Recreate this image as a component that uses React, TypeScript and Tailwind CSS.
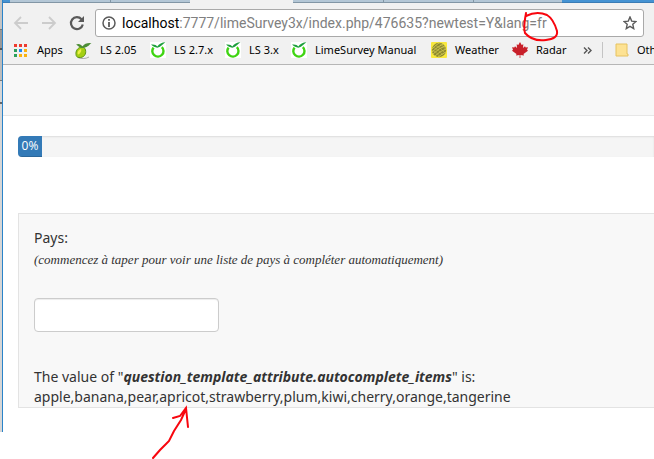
import React from "react";

const font = "font-['Open_Sans','Noto_Sans',sans-serif]";

function LimeRing() {
  return (
    <svg width="16" height="16" viewBox="0 0 16 16" fill="none" className="shrink-0">
      <rect width="16" height="16" fill="#fff" />
      <path d="M3.600 5.600A5.600 5.400 0 1 0 11.800 5.200" stroke="#3fd412" strokeWidth="2.400" />
      <path d="M1 2.600C4 2 6.300 3 7.300 4.400C9 2 12 .3 15.500 .3C12.500 2 11.500 5 7.300 5.800C5 5.600 3 4.400 1 2.600Z" fill="#1d9f3c" />
    </svg>
  );
}

function Lime() {
  return (
    <svg width="17" height="17" viewBox="0 0 17 17" className="shrink-0">
      <path d="M3 15.500C5 17 11 17 14 15" stroke="#aaa" fill="none" />
      <path d="M6 5C2.500 6 .5 9 1 12.500C1 14 2 15.500 4 15.500C9 16 11.500 12 10.500 8C10 5.500 8 4.500 6 5Z" fill="#a5cf12" stroke="#5d9418" />
      <path d="M4 8C2.500 9.500 2.300 11 3 12.500C5 12 7 9 6 7Z" fill="#eef04a" />
      <path d="M1 2.500C4 1 6 2.500 7.500 4.500C9 1.500 13 .5 16.500 1C14 2.500 14 5 8 6C4.500 6 3.500 4 1 2.500Z" fill="#4b8d35" />
    </svg>
  );
}

function Weather() {
  return (
    <svg width="16" height="16" viewBox="0 0 16 16" className="shrink-0">
      <rect width="16" height="16" rx="1" fill="#f8e83e" />
      <circle cx="8" cy="8" r="7.200" fill="#8d8a2e" />
      <path d="M1 7Q5 3 8 1M1 10Q6 5 12 2M2 12Q8 6 14 4M4 14Q9 9 15 7M7 15Q11 12 15 10" stroke="#dcd25a" strokeWidth=".8" fill="none" />
      <path d="M4 3Q10 6 14 11M2 5Q8 8 12 13M1 8Q6 10 9 15M8 1Q13 4 15 8" stroke="#c9bf4c" strokeWidth=".6" fill="none" />
    </svg>
  );
}

function Maple() {
  return (
    <svg width="16" height="16" viewBox="0 0 16 16" className="shrink-0">
      <path d="M8 0L9.700 3L11.300 2.200L11 6L13 4.200L13.700 5.500L16 5.200L15 7.800L16 8.700L11.500 12L12 13.500L8.400 13V16H7.600V13L4 13.500L4.500 12L0 8.700L1 7.800L0 5.200L2.300 5.500L3 4.200L5 6L4.700 2.200L6.300 3Z" fill="#c8202a" />
    </svg>
  );
}

function Apps() {
  const colors = ["#ee3b2e", "#ee3b2e", "#ee3b2e", "#2aa05a", "#1e88f5", "#f9b211", "#2aa05a", "#f9b211", "#f9b211"];
  return (
    <svg width="13" height="13" viewBox="0 0 13 13" className="mr-0.5 shrink-0">
      {colors.map((c, i) => (
        <rect key={i} x={(i % 3) * 5} y={Math.floor(i / 3) * 5} width="3" height="3" fill={c} />
      ))}
    </svg>
  );
}

function Bookmark({ icon, label, className }: { icon: React.ReactNode; label: string; className: string }) {
  return (
    <a href="#" className={"flex shrink-0 items-center gap-2 whitespace-nowrap " + className}>
      {icon}
      <span>{label}</span>
    </a>
  );
}

export default function App() {
  return (
    <div className={"relative min-h-screen overflow-hidden bg-white text-[#333] " + font}>
      <div className="flex">
        <div className="flex w-[3px] shrink-0 flex-col border-r border-[#2a83c9] bg-[#d6d6d6]">
          <div className="h-[30px] border-b border-[#777] bg-[#c4c4c4]" />
          <div className="h-[20px] border-b-2 border-[#555] bg-[#999]" />
          <div className="h-[31px] border-b border-[#777] bg-[#bcbcbc]" />
          <div className="h-[23px] border-b-2 border-[#666]" />
        </div>
        <div className="min-w-0 flex-1 pb-6">
          <header className="h-[65px] overflow-hidden border-b border-[#b6b6b6] bg-[#f1f1f1]">
            <div className="flex h-[3px]">
              <div className="w-[7px] border-b border-[#3a7cb5] bg-[#4593d3]" />
              <div className="w-[101px] border-r border-b border-[#8296a5] bg-[#b4c7d6]" />
              <div className="w-[79px] border-b border-[#8296a5] bg-[#b4c7d6]" />
              <div className="w-[103px]" />
              <div className="w-[91px] border-r border-b border-[#8296a5] bg-[#b4c7d6]" />
              <div className="w-[90px] border-r border-b border-[#8296a5] bg-[#b4c7d6]" />
              <div className="w-[88px] border-b border-[#8296a5] bg-[#b4c7d6]" />
              <div className="flex-1 border-b border-[#3a7cb5] bg-[#4593d3]" />
            </div>
            <div className="flex h-[36px] items-center pt-1 pr-[10px] pl-[10px]">
              <button aria-label="Back">
                <svg width="16" height="16" viewBox="0 0 16 16" fill="none" stroke="#ccc" strokeWidth="1.800"><path d="M15 8H2M8 2L2 8L8 14" /></svg>
              </button>
              <button aria-label="Forward" className="ml-3">
                <svg width="16" height="16" viewBox="0 0 16 16" fill="none" stroke="#ccc" strokeWidth="1.800"><path d="M1 8H14M8 2L14 8L8 14" /></svg>
              </button>
              <button aria-label="Reload" className="ml-3">
                <svg width="16" height="16" viewBox="0 0 16 16" fill="none"><path d="M12.500 4.200A6 6 0 1 0 13.800 9.500" stroke="#5a5a5a" strokeWidth="2.200" /><path d="M15 1V7H9Z" fill="#5a5a5a" /></svg>
              </button>
              <div className="ml-[10px] flex h-7 min-w-0 flex-1 items-center rounded-[3px] border border-[#a9a9a9] bg-white pr-1.5 pl-1.5 font-['Roboto',sans-serif] text-sm whitespace-nowrap text-[#808080]">
                <svg width="14" height="14" viewBox="0 0 14 14" fill="none" className="shrink-0"><circle cx="7" cy="7" r="6" stroke="#5a5a5a" strokeWidth="1.500" /><path d="M7 6V11M7 3V4.700" stroke="#5a5a5a" strokeWidth="1.800" /></svg>
                <div className="ml-1.5 min-w-0 flex-1 overflow-hidden"><span className="text-black">localhost</span>:7777/limeSurvey3x/index.php/476635?newtest=Y&amp;lang=fr</div>
                <button aria-label="Bookmark this page">
                  <svg width="14" height="14" viewBox="0 0 14 14" fill="none" stroke="#5a5a5a" strokeWidth="1.400"><path d="M7 1L8.700 5.100L13 5.500L9.800 8.300L10.700 12.600L7 10.300L3.300 12.600L4.200 8.300L1 5.500L5.300 5.100Z" /></svg>
                </button>
              </div>
            </div>
            <nav className="flex h-[22px] items-center pl-[11px] font-['Noto_Sans',sans-serif] text-[11px] text-black">
              <Bookmark icon={<Apps />} label="Apps" className="w-[61px]" />
              <Bookmark icon={<Lime />} label="LS 2.05" className="w-[75px]" />
              <Bookmark icon={<LimeRing />} label="LS 2.7.x" className="w-[75px]" />
              <Bookmark icon={<LimeRing />} label="LS 3.x" className="w-[66px]" />
              <Bookmark icon={<LimeRing />} label="LimeSurvey Manual" className="w-[140px]" />
              <Bookmark icon={<Weather />} label="Weather" className="w-[81px]" />
              <Bookmark icon={<Maple />} label="Radar" className="w-[71px]" />
              <button aria-label="More bookmarks" className="w-[19px] shrink-0">
                <svg width="9" height="7" viewBox="0 0 9 7" fill="none" stroke="#555" strokeWidth="1.400"><path d="M1 .5L4 3.500L1 6.500M5 .5L8 3.500L5 6.500" /></svg>
              </button>
              <div className="mr-3 h-4 w-px shrink-0 bg-[#c4c4c4]" />
              <Bookmark icon={<svg width="14" height="14" viewBox="0 0 14 14" className="shrink-0"><path d="M1 1H12V11H13V13H1Z" fill="#fde293" stroke="#e6c261" /></svg>} label="Other bookmarks" className="" />
            </nav>
          </header>
          <div className="h-[51px] border-b border-[#e7e7e7] bg-[#f8f8f8]" />
          <main className="pt-5 pl-[15px]">
            <div role="progressbar" aria-valuenow={0} className="flex h-[21px] overflow-hidden rounded-l bg-[#f5f5f5] shadow-[inset_0_1px_2px_rgba(0,0,0,0.1)]">
              <div className="w-6 bg-[#337ab7] text-center text-xs leading-5 text-white shadow-[inset_0_-1px_0_rgba(0,0,0,0.15)]">0%</div>
            </div>
            <section className="mt-14 h-[195px] border border-r-0 border-[#e3e3e3] bg-[#f8f8f8] pt-[14px] pl-[15px] font-['Noto_Sans',sans-serif] text-sm leading-5">
              <label htmlFor="country" className="block">Pays:</label>
              <p className="pt-0.5 font-['Liberation_Serif',serif] text-[13px] leading-5 italic">(commencez à taper pour voir une liste de pays à compléter automatiquement)</p>
              <input id="country" type="text" className="mt-7 block h-[34px] w-[185px] rounded border border-[#ccc] bg-white px-3 shadow-[inset_0_1px_1px_rgba(0,0,0,0.075)]" />
              <p className="mt-[35px] whitespace-nowrap">
                The value of "<strong className="italic">question_template_attribute.autocomplete_items</strong>" is:
                <br />
                apple,banana,pear,apricot,strawberry,plum,kiwi,cherry,orange,tangerine
              </p>
            </section>
          </main>
        </div>
      </div>
      <svg width="654" height="459" viewBox="0 0 654 459" fill="none" stroke="#f8060e" strokeWidth="2" strokeLinecap="round" className="pointer-events-none absolute top-0 left-0">
        <path d="M526 13C525 20 523 26 525 33C530 39 538 41 546 40C553 39 558 37 557 31C555 24 552 18 547 15C540 12 532 13 526 16" />
        <path d="M153 458L160 450L166 444L169 441L174 431L181 420L186 409M173 418L180 416L186 408L188 427" />
      </svg>
    </div>
  );
}
